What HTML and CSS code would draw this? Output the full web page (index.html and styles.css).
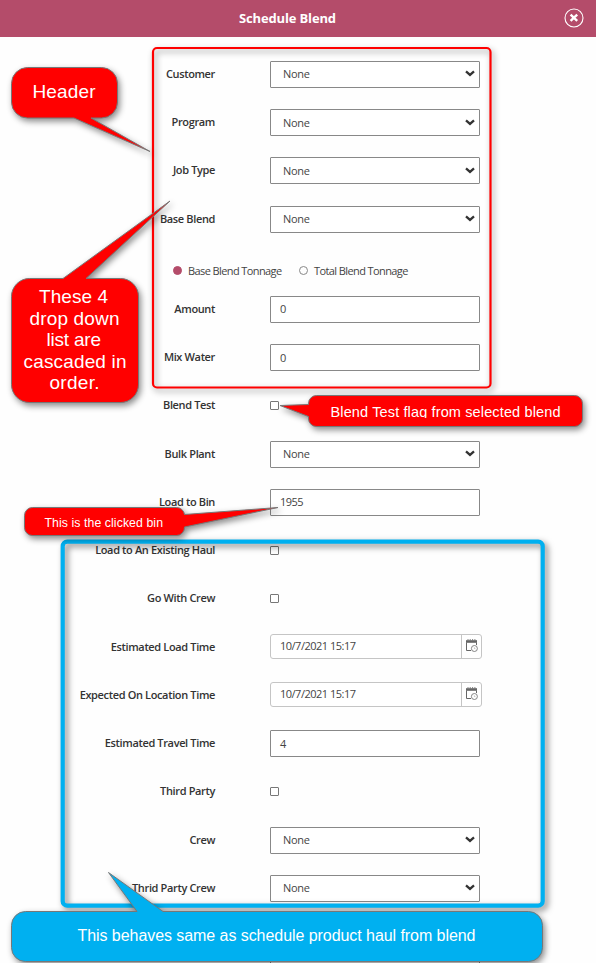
FILE: index.html
```html
<!DOCTYPE html>
<html lang="en">
<head>
<meta charset="utf-8">
<title>Schedule Blend</title>
<link rel="stylesheet" href="styles.css">
</head>
<body>
<svg class="defs" aria-hidden="true">
  <symbol id="chevron" viewBox="0 0 10 7"><path d="M1 1.3 5 4.9 9 1.3" fill="none" stroke="#333" stroke-width="2.3"/></symbol>
  <symbol id="calendar" viewBox="0 0 13 13">
    <path d="M1 1.2h11v2.6H1z" fill="#666"/>
    <path d="M3 0v2M5.200 0v2M7.600 0v2M9.900 0v2" stroke="#777" stroke-width=".9"/>
    <path d="M1.500 3.500v8H6M11.500 3.500v2.500" fill="none" stroke="#666"/>
    <circle cx="9.400" cy="9.500" r="3" fill="#fff" stroke="#777" stroke-width=".9"/>
    <path d="M9.400 8.400v1.200h1" fill="none" stroke="#999" stroke-width=".6"/>
  </symbol>
</svg>
<div class="dialog">
  <header class="titlebar">
    <h1 class="title">Schedule Blend</h1>
    <svg class="close" viewBox="0 0 20 20"><circle cx="10" cy="10" r="9" fill="none" stroke="#fff" stroke-width="1.1"/><path d="M6.600 6.600 13.200 12.900M13.200 6.600 6.600 12.900" stroke="#fff" stroke-width="2.4"/></svg>
  </header>
  <main class="form">
    <div class="row"><span class="label">Customer</span><div class="box select">None<svg class="chevron"><use href="#chevron"/></svg></div></div>
    <div class="row"><span class="label">Program</span><div class="box select">None<svg class="chevron"><use href="#chevron"/></svg></div></div>
    <div class="row"><span class="label">Job Type</span><div class="box select">None<svg class="chevron"><use href="#chevron"/></svg></div></div>
    <div class="row"><span class="label">Base Blend</span><div class="box select">None<svg class="chevron"><use href="#chevron"/></svg></div></div>
    <div class="radios">
      <i class="radio checked"></i><span class="radio-text base">Base Blend Tonnage</span>
      <i class="radio"></i><span class="radio-text">Total Blend Tonnage</span>
    </div>
    <div class="row"><span class="label">Amount</span><div class="box">0</div></div>
    <div class="row"><span class="label">Mix Water</span><div class="box">0</div></div>
    <div class="row"><span class="label">Blend Test</span><i class="check"></i></div>
    <div class="row"><span class="label">Bulk Plant</span><div class="box select">None<svg class="chevron"><use href="#chevron"/></svg></div></div>
    <div class="row"><span class="label">Load to Bin</span><div class="box">1955</div></div>
    <div class="row"><span class="label">Load to An Existing Haul</span><i class="check"></i></div>
    <div class="row"><span class="label">Go With Crew</span><i class="check"></i></div>
    <div class="row"><span class="label">Estimated Load Time</span><div class="date"><span class="date-text">10/7/2021 15:17</span><span class="picker"><svg class="calendar"><use href="#calendar"/></svg></span></div></div>
    <div class="row"><span class="label">Expected On Location Time</span><div class="date"><span class="date-text">10/7/2021 15:17</span><span class="picker"><svg class="calendar"><use href="#calendar"/></svg></span></div></div>
    <div class="row"><span class="label">Estimated Travel Time</span><div class="box">4</div></div>
    <div class="row"><span class="label">Third Party</span><i class="check"></i></div>
    <div class="row"><span class="label">Crew</span><div class="box select">None<svg class="chevron"><use href="#chevron"/></svg></div></div>
    <div class="row"><span class="label">Thrid Party Crew</span><div class="box select">None<svg class="chevron"><use href="#chevron"/></svg></div></div>
    <div class="row notes"><span class="label"></span><div class="box area"></div></div>
  </main>
</div>
<svg class="notes-layer" viewBox="0 0 596 963">
  <defs><clipPath id="flag-line"><rect x="320" y="398" width="250" height="20"/></clipPath></defs>
  <g class="shadow"><rect class="frame-red" x="153" y="48" width="337.500" height="339.500" rx="4"/></g>
  <g class="shadow strong"><rect class="frame-blue" x="62.700" y="541.700" width="480" height="364" rx="4.500"/></g>
  <path class="callout red shadow" d="M27.500 67.500h74a16 16 0 0 1 16 16v18.500a16 16 0 0 1-16 16H91L150 151.500 74 118H27.500a16 16 0 0 1-16-16V83.500a16 16 0 0 1 16-16z"/>
  <path class="callout red shadow" d="M29.500 278.500H63L170 201 86 278.500h34.500a18 18 0 0 1 18 18v88a18 18 0 0 1-18 18h-91a18 18 0 0 1-18-18v-88a18 18 0 0 1 18-18z"/>
  <path class="callout red shadow" d="M316.500 395.500h258a8 8 0 0 1 8 8v15a8 8 0 0 1-8 8h-258a8 8 0 0 1-8-8v-2L280 405.500l28.500-1v-1a8 8 0 0 1 8-8z"/>
  <path class="callout red shadow" d="M32.500 507.500h144a8 8 0 0 1 8 7L278 507.500 184.500 527a8 8 0 0 1-8 8.500h-144a8 8 0 0 1-8-8v-12a8 8 0 0 1 8-8z"/>
  <path class="callout blue shadow" d="M25.500 911.500H137L108.500 872.500 163 911.500h365.500a14 14 0 0 1 14 14v22a14 14 0 0 1-14 14h-503a14 14 0 0 1-14-14v-22a14 14 0 0 1 14-14z"/>
  <g class="note-text">
    <text x="32.500" y="98" font-size="19" textLength="63">Header</text>
    <text x="39" y="303" font-size="19" textLength="69">These 4</text>
    <text x="29.500" y="324.500" font-size="19" textLength="90">drop down</text>
    <text x="46.500" y="346" font-size="19" textLength="54.500">list are</text>
    <text x="23.500" y="367.500" font-size="19" textLength="103">cascaded in</text>
    <text x="49.500" y="389" font-size="19" textLength="50">order.</text>
    <text x="330.500" y="417" font-size="14.500" textLength="230" clip-path="url(#flag-line)">Blend Test flag from selected blend</text>
    <text x="44.500" y="527" font-size="12.300" textLength="118.500">This is the clicked bin</text>
    <text x="77.500" y="941" font-size="16" textLength="398">This behaves same as schedule product haul from blend</text>
  </g>
</svg>
</body>
</html>
```
FILE: styles.css
```css
* { box-sizing: border-box; }
body {
  margin: 0;
  width: 596px;
  height: 963px;
  overflow: hidden;
  position: relative;
  background: #fefefe;
  font-family: "Open Sans", "Noto Sans", sans-serif;
  font-size: 11px;
  color: #444;
}
.defs { position: absolute; width: 0; height: 0; }
.dialog { height: 963px; overflow: hidden; }
.titlebar {
  height: 37px;
  background: #b44c6a;
  display: grid;
  grid-template-columns: 239px 1fr auto;
  align-items: center;
  padding: 0 12px 0 0;
}
.title {
  grid-column: 2;
  margin: -2px 0 0;
  font-size: 13px;
  line-height: 18px;
  font-weight: 700;
  letter-spacing: -0.15px;
  color: #fff;
}
.close { width: 20px; height: 20px; margin-top: -2px; }
.form { padding-top: 13.25px; }
.row {
  height: 48.25px;
  display: grid;
  grid-template-columns: 215px auto;
  column-gap: 55px;
  align-items: center;
  justify-content: start;
}
.label {
  padding-bottom: 2px;
  text-align: right;
  font-weight: 600;
  letter-spacing: -0.36px;
  white-space: nowrap;
  color: #333;
}
.box {
  width: 210px;
  height: 27px;
  border: 1px solid #888;
  border-radius: 1px;
  background: #fff;
  padding: 0 4px 1px 9px;
  display: flex;
  align-items: center;
  letter-spacing: -0.5px;
}
.select { justify-content: space-between; padding-left: 12px; letter-spacing: -0.3px; }
.chevron { width: 10px; height: 7px; }
.check { width: 9px; height: 9px; margin-bottom: 1px; border: 1px solid #777; border-radius: 1px; background: #fff; }
.date {
  width: 212px;
  height: 25px;
  margin-bottom: 2px;
  border: 1px solid #c5c5c5;
  border-radius: 3px;
  display: flex;
  background: #fff;
}
.date-text { flex: 1; padding-left: 9px; line-height: 22px; letter-spacing: -0.5px; }
.picker { width: 20px; border-left: 1px solid #c5c5c5; display: flex; justify-content: center; }
.calendar { width: 13px; height: 13px; margin-top: 4px; }
.radios {
  height: 42.1px;
  padding: 13px 0 0 173px;
  display: flex;
  align-items: flex-start;
}
.radio { width: 9px; height: 9px; margin-top: 10px; border: 1px solid #888; border-radius: 50%; }
.radio.checked { border-color: #b44c6a; background: #b44c6a; }
.radio-text { margin: 7px 0 0 6px; line-height: 15px; letter-spacing: -0.6px; white-space: nowrap; }
.radio-text.base { width: 111px; }
.row.notes { height: 80px; align-items: start; }
.area { height: 60px; margin-top: 10px; }
.notes-layer { position: absolute; left: 0; top: 0; width: 596px; height: 963px; pointer-events: none; }
.frame-red { fill: none; stroke: #f00; stroke-width: 2.2px; }
.frame-blue { fill: none; stroke: #00b0f0; stroke-width: 4.2px; }
.shadow { filter: drop-shadow(2px 3px 3px rgba(0, 0, 0, 0.45)); }
.strong { filter: drop-shadow(3px 3px 3px rgba(0, 0, 0, 0.5)); }
.callout { stroke: #777; stroke-width: 1px; }
.red { fill: #f00; }
.blue { fill: #00b0f0; }
.note-text { font-family: "Liberation Sans", Arial, sans-serif; fill: #fff; }
```
